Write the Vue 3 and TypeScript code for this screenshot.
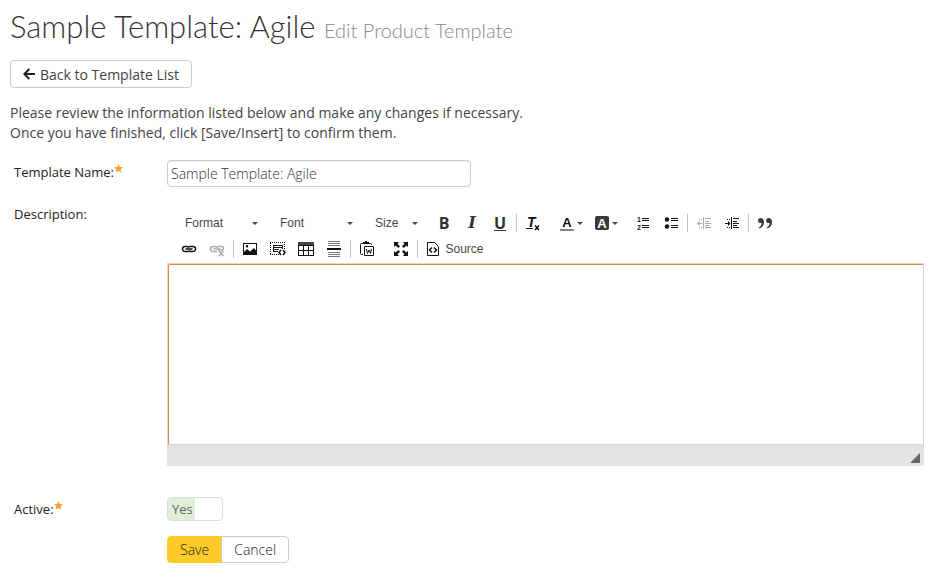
<script setup lang="ts">
import { ref } from 'vue'

interface Combo {
  label: string
  size: string
  options: string[]
}

const combos: Combo[] = [
  { label: 'Format', size: 'wide', options: ['Normal', 'Heading 1', 'Heading 2'] },
  { label: 'Font', size: 'wide', options: ['Arial', 'Georgia', 'Verdana'] },
  { label: 'Size', size: 'narrow', options: ['10', '12', '14', '18'] },
]
const selected = ref<string[]>(['', '', ''])
const templateName = ref('Sample Template: Agile')
const description = ref('')
const active = ref(true)
</script>

<template>
  <main class="page">
    <h1>Sample Template: Agile <small>Edit Product Template</small></h1>

    <a class="btn back" href="#templates">
      <svg class="arrow" viewBox="0 0 12 12" aria-hidden="true">
        <path d="M6.3 1 1.4 6l4.900 5M1.600 6H12" fill="none" stroke="currentColor" stroke-width="2" />
      </svg>
      Back to Template List
    </a>

    <p class="intro">
      Please review the information listed below and make any changes if necessary.<br />
      Once you have finished, click [Save/Insert] to confirm them.
    </p>

    <form class="form" @submit.prevent>
      <label class="name" for="template-name">
        Template Name:<svg class="star" viewBox="0 0 10 10" aria-hidden="true"><path d="M5 .3 6.400 3.300l3.400.4-2.500 2.300.7 3.500L5 7.800 2 9.500l.7-3.500L.2 3.700l3.400-.4z" /></svg>
      </label>
      <input id="template-name" v-model="templateName" class="text" type="text" />

      <label class="name described" for="description">Description:</label>
      <div class="editor">
        <div class="toolbar">
          <div class="tools">
            <span v-for="(combo, i) in combos" :key="combo.label" class="combo" :class="combo.size">
              <select v-model="selected[i]" :aria-label="combo.label">
                <option value="">{{ combo.label }}</option>
                <option v-for="option in combo.options" :key="option">{{ option }}</option>
              </select>
              <i class="caret"></i>
            </span>
            <button type="button" class="tool glyph bold" aria-label="Bold">B</button>
            <button type="button" class="tool glyph italic" aria-label="Italic">I</button>
            <button type="button" class="tool glyph under" aria-label="Underline">U</button>
            <i class="sep"></i>
            <button type="button" class="tool" aria-label="Remove Format">
              <svg class="icon" viewBox="0 0 16 16">
                <text x="2" y="12" class="t-remove">T</text>
                <path d="M1 13h7v1H1z" />
                <path d="m10 10.500 4 4.500m0-4.500-4 4.500" class="line link" />
              </svg>
            </button>
            <i class="gap"></i>
            <button type="button" class="tool menu" aria-label="Text Color">
              <svg class="icon" viewBox="0 0 16 16">
                <text x="8" y="12" class="t-color">A</text>
                <path d="M1 14h14v2H1z" fill="#888" />
              </svg>
              <i class="caret"></i>
            </button>
            <button type="button" class="tool menu" aria-label="Background Color">
              <svg class="icon" viewBox="0 0 16 16">
                <rect x="1" y="1" width="14" height="14" rx="2" fill="#3a3a3a" />
                <text x="8" y="13" class="t-color light">A</text>
              </svg>
              <i class="caret"></i>
            </button>
            <i class="gap"></i>
            <button type="button" class="tool" aria-label="Numbered List">
              <svg class="icon" viewBox="0 0 16 16">
                <text x="2" y="7" class="t-num">1</text>
                <text x="2" y="15" class="t-num">2</text>
                <path d="M7 3h7v1H7zM7 5h7v1H7zM7 10h7v1H7zM7 12h7v1H7z" />
              </svg>
            </button>
            <button type="button" class="tool" aria-label="Bulleted List">
              <svg class="icon" viewBox="0 0 16 16">
                <circle cx="4" cy="4.500" r="2.200" /><circle cx="4" cy="11.500" r="2.200" />
                <path d="M8 3h7v1H8zM8 5h7v1H8zM8 10h7v1H8zM8 12h7v1H8z" />
              </svg>
            </button>
            <i class="sep"></i>
            <button type="button" class="tool" disabled aria-label="Decrease Indent">
              <svg class="icon" viewBox="0 0 16 16">
                <path d="M7 2h1v12H7zM9 3h6v1H9zM9 6h4v1H9zM9 8h6v1H9zM9 10h4v1H9zM9 12h6v1H9zM3 4h1v1H3zM5 4h1v1H5zM3 12h1v1H3zM5 12h1v1H5zM3 8h3v1H3zM1 8.500 3.500 6v5z" />
              </svg>
            </button>
            <button type="button" class="tool" aria-label="Increase Indent">
              <svg class="icon" viewBox="0 0 16 16">
                <path d="M7 2h1v12H7zM9 3h6v1H9zM9 6h4v1H9zM9 8h6v1H9zM9 10h4v1H9zM9 12h6v1H9zM3 4h1v1H3zM5 4h1v1H5zM3 12h1v1H3zM5 12h1v1H5zM1 8h3v1H1zM6.500 8.500 4 6v5z" />
              </svg>
            </button>
            <i class="sep"></i>
            <button type="button" class="tool" aria-label="Block Quote">
              <svg class="icon" viewBox="0 0 16 16">
                <path d="M1 5.400C1 4 2 3 3.600 3 5.600 3 7 4.500 7 7c0 3.500-2 5.800-5 6.600l-.4-.9C3.400 11.800 4.500 10.300 4.600 8 2.500 8.300 1 7.200 1 5.400zM9 5.400C9 4 10 3 11.600 3 13.600 3 15 4.500 15 7c0 3.500-2 5.800-5 6.600l-.4-.9c1.800-.9 2.900-2.400 3-4.700C10.500 8.300 9 7.200 9 5.400z" fill="#3a3a3a" />
              </svg>
            </button>
          </div>

          <div class="tools">
            <button type="button" class="tool" aria-label="Link">
              <svg class="icon" viewBox="0 0 16 16">
                <path d="M7 5.500H4a2.500 2.500 0 0 0 0 5h3c1 0 1.700-.6 2-1.300M9 10.500h3a2.500 2.500 0 0 0 0-5H9c-1 0-1.700.6-2 1.300M4.500 8h7" class="line link" />
              </svg>
            </button>
            <button type="button" class="tool" disabled aria-label="Unlink">
              <svg class="icon" viewBox="0 0 16 16">
                <path d="M7 5.500H4a2.500 2.500 0 0 0 0 5h4M9 9h3.500c3 0 2.600-3.500 0-3.500H9c-1 0-1.700.6-2 1.300M4.500 8H11M10 10l4.500 5m0-5L10 15" class="line link" />
              </svg>
            </button>
            <i class="sep"></i>
            <button type="button" class="tool" aria-label="Image">
              <svg class="icon" viewBox="0 0 16 16">
                <path fill-rule="evenodd" d="M1 2h14v12H1zM2 3v8l3-3 3 2.500L12 7l2 2.500V3zM5 4a1.300 1.300 0 1 1 0 2.600A1.300 1.300 0 0 1 5 4z" />
              </svg>
            </button>
            <button type="button" class="tool" aria-label="Templates">
              <svg class="icon" viewBox="0 0 16 16">
                <path d="M0 1.500h15M0 13.500h9M.5 2v11M14.500 3v6" class="line dots" />
                <path d="M3 4h10v1H3zM3 6h10v1H3zM3 8h6v1H3zM3 10h5v1H3zM3 4h1v7H3zM12 4h1v4h-1z" />
                <path d="M11 9 9 11.500l2 2.500M13 9l2 2.500-2 2.500" class="line link" />
              </svg>
            </button>
            <button type="button" class="tool" aria-label="Table">
              <svg class="icon" viewBox="0 0 16 16">
                <path d="M0 1h16v3H0z" fill="#444" />
                <path d="M0 4h1v11H0zM5 4h1v11H5zM10 4h1v11h-1zM15 4h1v11h-1zM0 4h16v1H0zM0 9h16v1H0zM0 14h16v1H0z" />
              </svg>
            </button>
            <button type="button" class="tool" aria-label="Horizontal Line">
              <svg class="icon" viewBox="0 0 16 16">
                <path d="M2 0h12v1H2zM2 2h12v1H2zM2 4h12v1H2zM2 11h12v1H2zM2 13h12v1H2zM2 15h12v1H2z" fill="#777" />
                <path d="M1 7h14v2H1z" />
              </svg>
            </button>
            <i class="sep"></i>
            <button type="button" class="tool" aria-label="Paste from Word">
              <svg class="icon" viewBox="0 0 16 16">
                <path d="M4 2.500H2.500a1 1 0 0 0-1 1v9a1 1 0 0 0 1 1H4M10 2.500h1.500a1 1 0 0 1 1 1V4M5.500 5.500h9v9h-9z" class="line" />
                <path d="M4 1h2V0h2v1h2v2H4z" />
                <path d="m7.500 8 1 4.500L10 9l1.500 3.500 1-4.500" class="line" />
              </svg>
            </button>
            <i class="gap"></i>
            <button type="button" class="tool" aria-label="Maximize">
              <svg class="icon" viewBox="0 0 16 16">
                <path d="M1 1h5L4.500 2.700 7 5.200 5.200 7 2.700 4.500 1 6zM15 1v5l-1.700-1.500L10.800 7 9 5.200l2.500-2.500L10 1zM1 15v-5l1.700 1.500L5.200 9 7 10.800l-2.500 2.500L6 15zM15 15h-5l1.500-1.700L9 10.800 10.800 9l2.500 2.500L15 10z" />
              </svg>
            </button>
            <i class="sep"></i>
            <button type="button" class="tool source">
              <svg class="icon" viewBox="0 0 16 16" aria-hidden="true">
                <path d="M2.500 1.500h7l4 4v9h-11z" class="line" />
                <path d="M7 6.500 4.500 9 7 11.500M9 6.500 11.500 9 9 11.500" class="line link" />
              </svg>
              Source
            </button>
          </div>
        </div>
        <div class="area">
          <textarea id="description" v-model="description"></textarea>
        </div>
        <div class="bottom"><i class="grip"></i></div>
      </div>

      <label class="name active" for="active">
        Active:<svg class="star" viewBox="0 0 10 10" aria-hidden="true"><path d="M5 .3 6.400 3.300l3.400.4-2.500 2.300.7 3.500L5 7.800 2 9.500l.7-3.500L.2 3.700l3.400-.4z" /></svg>
      </label>
      <label class="switch">
        <input id="active" v-model="active" type="checkbox" />
        <span class="state">{{ active ? 'Yes' : 'No' }}</span>
      </label>

      <div class="actions">
        <button type="submit" class="btn save">Save</button>
        <button type="button" class="btn cancel">Cancel</button>
      </div>
    </form>
  </main>
</template>

<style>
body {
  background: #fff;
}
</style>

<style scoped>
.page {
  padding: 6px 15px 20px 10px;
  color: #222;
  font: 300 14px/20px "Open Sans", "Noto Sans", sans-serif;
}
h1 {
  margin: 0 0 10px;
  color: #333;
  font: 300 31px/40px Lato, sans-serif;
}
h1 small {
  color: #888;
  font-size: 20px;
}
.btn {
  box-sizing: border-box;
  height: 27px;
  padding: 0 12px;
  border: 1px solid #ccc;
  border-radius: 4px;
  background: #fff;
  color: #222;
  font: inherit;
  line-height: 25px;
  text-decoration: none;
}
.back {
  display: inline-flex;
  align-items: center;
  gap: 5px;
  height: 28px;
  color: #444;
  font-weight: 400;
}
.arrow {
  width: 12px;
  height: 12px;
  color: #222;
}
.intro {
  margin: 15px 0 17px;
  color: #444;
  font-weight: 400;
}
.form {
  display: grid;
  grid-template-columns: 153px minmax(0, 1fr);
  padding-left: 4px;
}
.name {
  padding-top: 2px;
  color: #222;
  font-size: 13px;
  font-weight: 400;
}
.star {
  width: 9px;
  height: 9px;
  vertical-align: 4px;
  fill: #f0a02c;
}
.text {
  box-sizing: border-box;
  width: 304px;
  max-width: 100%;
  height: 27px;
  padding: 0 3px;
  border: 1px solid #ccc;
  border-radius: 4px;
  box-shadow: inset 0 1px 1px #eee;
  color: #333;
  font: inherit;
}
.described {
  padding-top: 17px;
}
.editor {
  padding-top: 23px;
}
.toolbar {
  padding: 0 8px 1px;
}
.tools {
  display: flex;
  height: 26px;
  align-items: center;
}
.tool {
  display: flex;
  flex: none;
  align-items: center;
  justify-content: center;
  width: 28px;
  height: 24px;
  padding: 0;
  border: 0;
  background: none;
  color: #111;
}
.tool:disabled {
  color: #aaa;
}
.icon {
  width: 16px;
  height: 16px;
  fill: currentColor;
}
.line {
  fill: none;
  stroke: currentColor;
}
.link {
  stroke-width: 1.5;
}
.dots {
  stroke-dasharray: 1 1;
}
.glyph {
  color: #333;
  font: bold 16px/20px "Open Sans", sans-serif;
}
.italic {
  font-family: "DejaVu Serif", serif;
  font-style: italic;
}
.under {
  text-decoration: underline;
}
.t-remove {
  font: italic bold 14px "Liberation Sans", sans-serif;
}
.t-color {
  font: bold 13px "Liberation Sans", sans-serif;
  text-anchor: middle;
}
.light {
  fill: #fff;
}
.t-num {
  font: bold 7px "Liberation Sans", sans-serif;
}
.menu {
  gap: 2px;
  width: 35px;
}
.source {
  gap: 4px;
  width: 69px;
  color: #484848;
  font: 12px "Liberation Sans", Arial, sans-serif;
}
.source .icon {
  color: #111;
}
.combo {
  display: flex;
  flex: none;
  align-items: center;
  width: 95px;
}
.combo.narrow {
  width: 65px;
}
.combo select {
  flex: 1;
  min-width: 0;
  height: 24px;
  padding: 0 0 0 10px;
  border: 0;
  appearance: none;
  background: none;
  color: #484848;
  font: 12px "Liberation Sans", Arial, sans-serif;
}
.combo .caret {
  margin-right: 12px;
}
.caret {
  border: 3px solid transparent;
  border-top-color: #484848;
  border-bottom: 0;
}
.sep {
  width: 1px;
  height: 18px;
  margin: 0 2px;
  background: #c4c4c4;
}
.gap {
  width: 6px;
}
.area {
  border-top: 1px solid #d4d8dc;
  border-left: 1px solid #d8d8d8;
}
textarea {
  display: block;
  box-sizing: border-box;
  width: 100%;
  height: 181px;
  border-style: solid;
  border-width: 1px;
  border-color: #f28638 #d8d8d8 #d8d8d8 #f28638;
  border-radius: 2px 0 0 0;
  outline: 0;
  background: #fff;
  resize: none;
}
.bottom {
  display: flex;
  align-items: flex-end;
  justify-content: flex-end;
  height: 21px;
  padding: 0 4px 3px;
  box-sizing: border-box;
  background: #e4e4e4;
}
.grip {
  border: 5px solid #666;
  border-top-color: transparent;
  border-left-color: transparent;
}
.active,
.switch {
  margin-top: 31px;
}
.switch {
  display: flex;
  box-sizing: border-box;
  width: 56px;
  height: 24px;
  border: 1px solid #ddd;
  border-radius: 4px;
  overflow: hidden;
}
.switch input {
  width: 0;
  height: 0;
  margin: 0;
  appearance: none;
}
.state {
  width: 27px;
  padding-left: 4px;
  box-sizing: border-box;
  line-height: 22px;
  background: #dff0d8;
  color: #666;
  font-size: 13px;
  font-weight: 400;
}
.actions {
  display: flex;
  grid-column: 2;
  margin-top: 15px;
}
.save {
  border-color: #ffcb28;
  border-radius: 4px 0 0 4px;
  background: #ffcb28;
}
.cancel {
  margin-left: -1px;
  border-radius: 0 4px 4px 0;
}
</style>
